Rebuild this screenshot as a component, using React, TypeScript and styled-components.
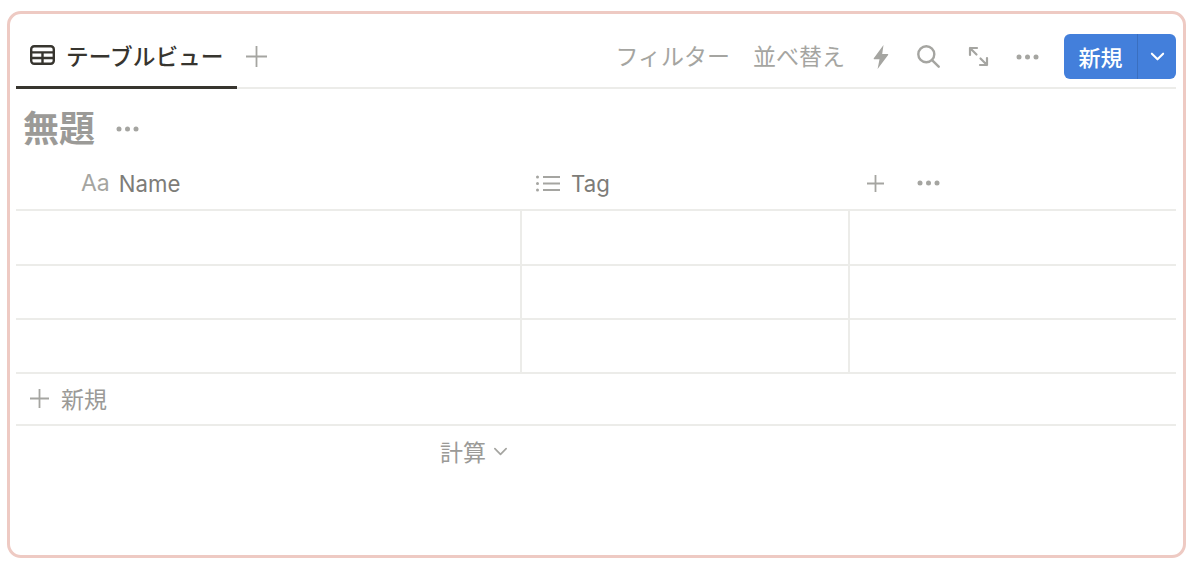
import React from 'react';
import styled, { createGlobalStyle } from 'styled-components';

const FONT = `Inter, "Liberation Sans", "Noto Sans CJK JP", sans-serif`;
const LINE = '#ecece9';
const MUTED = '#a5a5a1';

const GlobalStyle = createGlobalStyle`
  html, body {
    margin: 0;
    background: #fff;
    font-family: ${FONT};
  }
`;

const Frame = styled.div`
  box-sizing: border-box;
  width: 1179px;
  height: 547px;
  margin: 11px 0 0 7px;
  padding: 0 7px 0 6px;
  border: 3px solid #eecac3;
  border-radius: 14px;
  background: #fff;
`;

const TopBar = styled.div`
  display: flex;
  align-items: stretch;
  justify-content: space-between;
  height: 75px;
  box-sizing: border-box;
  border-bottom: 2px solid ${LINE};
`;

const TabGroup = styled.div`
  display: flex;
  align-items: stretch;
`;

const Tab = styled.div`
  display: flex;
  align-items: center;
  gap: 11px;
  width: 221px;
  box-sizing: border-box;
  height: 75px;
  padding: 10px 0 0 14px;
  border-bottom: 3px solid #37352f;
  font-size: 22.7px;
  font-weight: 500;
  color: #37352f;
  white-space: nowrap;
`;

const AddTab = styled.div`
  display: flex;
  align-items: center;
  padding: 11px 0 0 9px;
`;

const Actions = styled.div`
  display: flex;
  align-items: center;
  padding-top: 12px;
`;

const ActionText = styled.span<{ $gap: number }>`
  font-size: 23px;
  color: ${MUTED};
  margin-right: ${({ $gap }) => $gap}px;
  padding-bottom: 4px;
  white-space: nowrap;
`;

const ActionIcon = styled.span<{ $gap: number }>`
  display: flex;
  margin-right: ${({ $gap }) => $gap}px;
`;

const NewButton = styled.div`
  display: flex;
  align-items: stretch;
  width: 112px;
  height: 45px;
  border-radius: 6px;
  background: #437fdb;
  color: #fff;
  overflow: hidden;
`;

const NewLabel = styled.div`
  display: flex;
  align-items: center;
  justify-content: center;
  width: 74px;
  padding-bottom: 2px;
  box-sizing: border-box;
  font-size: 22px;
  font-weight: 500;
  border-right: 1px solid #3a6fc0;
`;

const NewCaret = styled.div`
  flex: 1;
  display: flex;
  align-items: center;
  justify-content: center;
`;

const TitleRow = styled.div`
  display: flex;
  align-items: center;
  gap: 21px;
  height: 72px;
  padding: 8px 0 0 7px;
  box-sizing: border-box;
`;

const Title = styled.h1`
  margin: 0;
  font-size: 36px;
  line-height: 44px;
  font-weight: 700;
  color: #9b9a97;
`;

const Grid = styled.div`
  display: grid;
  grid-template-columns: 506px 328px 1fr;
`;

const HeaderCell = styled.div<{ $pad: number }>`
  display: flex;
  align-items: center;
  height: 50px;
  box-sizing: border-box;
  padding: 0 0 4px ${({ $pad }) => $pad}px;
  border-bottom: 2px solid ${LINE};
  font-size: 22.2px;
  color: #7d7c78;
`;

const TypeMark = styled.span`
  color: ${MUTED};
  font-size: 23px;
  margin-right: 9px;
`;

const ListMark = styled.span`
  display: flex;
  margin-right: 11px;
`;

const HeaderAction = styled.span<{ $gap?: number }>`
  display: flex;
  margin-right: ${({ $gap }) => $gap ?? 0}px;
`;

const BodyCell = styled.div<{ $last?: boolean }>`
  height: 54px;
  box-sizing: border-box;
  border-bottom: 2px solid ${LINE};
  border-right: ${({ $last }) => ($last ? 'none' : `2px solid ${LINE}`)};

  &:nth-child(-n + 6) {
    height: 55px;
  }
`;

const AddRow = styled.div`
  display: flex;
  align-items: center;
  gap: 12px;
  height: 52px;
  box-sizing: border-box;
  padding: 0 0 2px 14px;
  border-bottom: 2px solid ${LINE};
  font-size: 23px;
  color: #9b9a97;
`;

const CalcRow = styled.div`
  display: flex;
  align-items: center;
  gap: 7px;
  height: 54px;
  padding: 0 0 4px 424px;
  box-sizing: border-box;
  font-size: 23px;
  color: #9b9a97;
`;

const Plus = ({ size, color }: { size: number; color: string }) => (
  <svg width={size} height={size} viewBox="0 0 20 20" fill="none" stroke={color} strokeWidth={(20 / size) * 1.8}>
    <path d="M10 0v20M0 10h20" />
  </svg>
);

const Dots = ({ color = MUTED }: { color?: string }) => (
  <svg width="23" height="6" viewBox="0 0 23 6" fill={color}>
    <circle cx="3" cy="3" r="2.5" />
    <circle cx="11.5" cy="3" r="2.5" />
    <circle cx="20" cy="3" r="2.5" />
  </svg>
);

const Caret = ({ size, color, width }: { size: number; color: string; width: number }) => (
  <svg width={size} height={size} viewBox="0 0 16 16" fill="none" stroke={color} strokeWidth={width} strokeLinecap="round" strokeLinejoin="round">
    <path d="M2 5l6 6 6-6" />
  </svg>
);

const TableIcon = () => (
  <svg width="25" height="20" viewBox="0 0 25 20" fill="none" stroke="#37352f" strokeWidth="2.4">
    <rect x="1.2" y="1.2" width="22.6" height="17.6" rx="3" />
    <path d="M1 7.4h23M1 13h23M12.5 7.4V19" />
  </svg>
);

const BoltIcon = () => (
  <svg width="16" height="24" viewBox="0 0 16 24" fill={MUTED}>
    <path d="M10.5 0 .8 13.2c-.3.5 0 1 .5 1h5.2L4.6 24l10.5-14c.3-.5 0-1-.5-1H9.2L10.5 0z" />
  </svg>
);

const SearchIcon = () => (
  <svg width="23" height="23" viewBox="0 0 23 23" fill="none" stroke={MUTED} strokeWidth="2.4" strokeLinecap="round">
    <circle cx="9.3" cy="9.3" r="8" />
    <path d="M15.3 15.3l6.4 6.4" />
  </svg>
);

const ExpandIcon = () => (
  <svg width="21" height="21" viewBox="0 0 21 21" fill="none" stroke={MUTED} strokeWidth="2.2" strokeLinecap="round" strokeLinejoin="round">
    <path d="M2 9V2h7M2 2l6.5 6.5M19 12v7h-7M19 19l-6.5-6.5" />
  </svg>
);

const ListIcon = () => (
  <svg width="24" height="17" viewBox="0 0 24 17" fill="none" stroke={MUTED} strokeWidth="2">
    <path d="M7 2h17M7 8.5h17M7 15h17" />
    <g fill={MUTED} stroke="none">
      <circle cx="1.5" cy="2" r="1.5" />
      <circle cx="1.5" cy="8.5" r="1.5" />
      <circle cx="1.5" cy="15" r="1.5" />
    </g>
  </svg>
);

const App: React.FC = () => (
  <>
    <GlobalStyle />
    <Frame>
      <TopBar>
        <TabGroup>
          <Tab>
            <TableIcon />
            テーブルビュー
          </Tab>
          <AddTab>
            <Plus size={21} color={MUTED} />
          </AddTab>
        </TabGroup>
        <Actions>
          <ActionText $gap={23}>フィルター</ActionText>
          <ActionText $gap={28}>並べ替え</ActionText>
          <ActionIcon $gap={28}><BoltIcon /></ActionIcon>
          <ActionIcon $gap={28}><SearchIcon /></ActionIcon>
          <ActionIcon $gap={27}><ExpandIcon /></ActionIcon>
          <ActionIcon $gap={25}><Dots /></ActionIcon>
          <NewButton>
            <NewLabel>新規</NewLabel>
            <NewCaret><Caret size={15} color="#fff" width={2.2} /></NewCaret>
          </NewButton>
        </Actions>
      </TopBar>
      <TitleRow>
        <Title>無題</Title>
        <Dots />
      </TitleRow>
      <Grid>
        <HeaderCell $pad={65}>
          <TypeMark>Aa</TypeMark>
          Name
        </HeaderCell>
        <HeaderCell $pad={14}>
          <ListMark><ListIcon /></ListMark>
          Tag
        </HeaderCell>
        <HeaderCell $pad={17}>
          <HeaderAction $gap={33}><Plus size={17} color={MUTED} /></HeaderAction>
          <HeaderAction><Dots /></HeaderAction>
        </HeaderCell>
        {[0, 1, 2].map(row => (
          <React.Fragment key={row}>
            <BodyCell />
            <BodyCell />
            <BodyCell $last />
          </React.Fragment>
        ))}
      </Grid>
      <AddRow>
        <Plus size={19} color={MUTED} />
        新規
      </AddRow>
      <CalcRow>
        計算
        <Caret size={15} color={MUTED} width={1.8} />
      </CalcRow>
    </Frame>
  </>
);

export default App;
